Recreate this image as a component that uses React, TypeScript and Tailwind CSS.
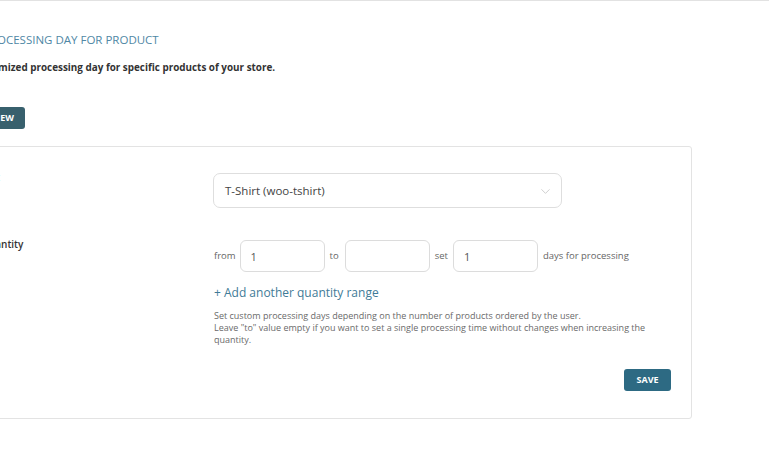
import { ChevronDown } from "lucide-react";

const font = "font-['Open_Sans','Noto_Sans',sans-serif]";

const NumberBox = ({ value }: { value: string }) => (
  <input
    readOnly
    value={value}
    className="w-[85px] h-[32px] rounded-[6px] border border-[#dcdcdc] bg-white px-[10px] text-[11px] text-[#555] outline-none"
  />
);

export default function App() {
  return (
    <div className={`${font} w-full h-[452px] overflow-hidden bg-white border-t border-[#e2e2e2]`}>
      {/* Header */}
      <div className="ml-[-17px] pt-[31px]">
        <h2 className="text-[11.5px] leading-[16px] uppercase text-[#4f87a5]">
          Processing day for product
        </h2>
        <p className="mt-[12px] ml-[-13px] text-[9.9px] leading-[14px] font-bold text-[#333]">
          Customized processing day for specific products of your store.
        </p>
        <button className="mt-[33px] ml-[-1px] h-[22px] rounded-[3px] bg-[#38606d] px-[11px] text-[9px] font-bold uppercase text-white">
          New
        </button>
      </div>

      {/* Panel */}
      <div className="ml-[-37px] mt-[17px] w-[729px] h-[273px] rounded-[3px] border border-[#e3e3e3] bg-white pt-[26px] pr-[20px]">
        <div className="flex">
          <div className="w-[249px] shrink-0 pl-[1px] mt-[-3px] text-[10px] font-semibold text-[#333]">
            <span className="ml-[-3px]">Product</span>
          </div>
          <div className="relative w-[349px] h-[35px] rounded-[7px] border border-[#dedede] flex items-center pl-[11px] text-[11.5px] text-[#444]">
            T-Shirt (woo-tshirt)
            <ChevronDown className="absolute right-[8px] top-[10px] w-[15px] h-[15px] text-[#c4c4c4]" strokeWidth={1.3} />
          </div>
        </div>

        <div className="flex mt-[32px]">
          <div className="w-[249px] shrink-0 pl-[17px] mt-[-3px] text-[10px] font-semibold text-[#333]">
            Quantity
          </div>
          <div className="flex-1">
            <div className="flex items-center text-[9.5px] text-[#666]">
              <span className="ml-[1px] mr-[4px]">from</span>
              <NumberBox value="1" />
              <span className="ml-[5px] mr-[6px]">to</span>
              <NumberBox value="" />
              <span className="ml-[5px] mr-[5px]">set</span>
              <NumberBox value="1" />
              <span className="ml-[5px]">days for processing</span>
            </div>
            <div className="mt-[13px] ml-[1px] text-[12px] leading-[16px] text-[#3f7b97]">
              + Add another quantity range
            </div>
            <p className="mt-[9px] ml-[1px] w-[442px] text-[9px] leading-[12px] text-[#6a6a6a]">
              Set custom processing days depending on the number of products ordered by the user.
              <br />
              Leave "to" value empty if you want to set a single processing time without changes when increasing the quantity.
            </p>
          </div>
        </div>

        <div className="flex justify-end mt-[23px]">
          <button className="h-[22px] w-[47px] rounded-[3px] bg-[#2d6a83] text-[9px] font-bold uppercase text-white">
            Save
          </button>
        </div>
      </div>
    </div>
  );
}
